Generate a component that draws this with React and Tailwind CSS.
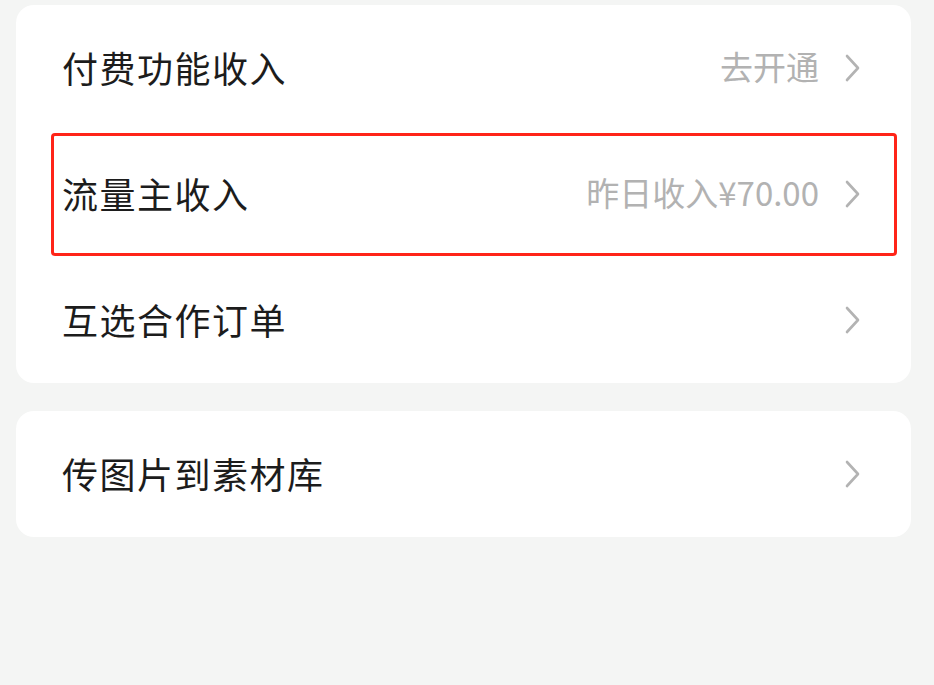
import React from 'react';

const Chevron = () => (
    <svg width="18" height="30" viewBox="0 0 18 30" fill="none" className="shrink-0">
        <path d="M4 3L15 15L4 27" stroke="#b3b3b3" strokeWidth="2.6" strokeLinecap="round" strokeLinejoin="round" />
    </svg>
);

const Row = ({ title, value, boxed }) => (
    <div className="relative h-[126px] flex items-center pl-[46px] pr-[50px]">
        <p className="flex-1 text-[36px] text-[#1c1c1c] leading-none tracking-[1.5px] -mt-[3px]">{title}</p>
        {value && <p className="text-[33px] text-[#b2b2b2] leading-none mr-[24px] -mt-[3px]">{value}</p>}
        <Chevron />
        {boxed && (
            <div className="absolute left-[35px] right-[14px] top-[2px] bottom-[1px] border-[3px] border-[#ff2418] rounded-[4px]" />
        )}
    </div>
);

const App = () => (
    <div className="min-h-[685px] bg-[#f4f5f4] px-4 pt-[5px] font-['Noto_Sans_CJK_SC','Noto_Sans',sans-serif]">
        <div className="bg-white rounded-[18px] w-[895px]">
            <Row title="付费功能收入" value="去开通" />
            <Row title="流量主收入" value="昨日收入¥70.00" boxed />
            <Row title="互选合作订单" />
        </div>
        <div className="bg-white rounded-[18px] w-[895px] mt-[28px]">
            <Row title="传图片到素材库" />
        </div>
    </div>
);

export default App;
